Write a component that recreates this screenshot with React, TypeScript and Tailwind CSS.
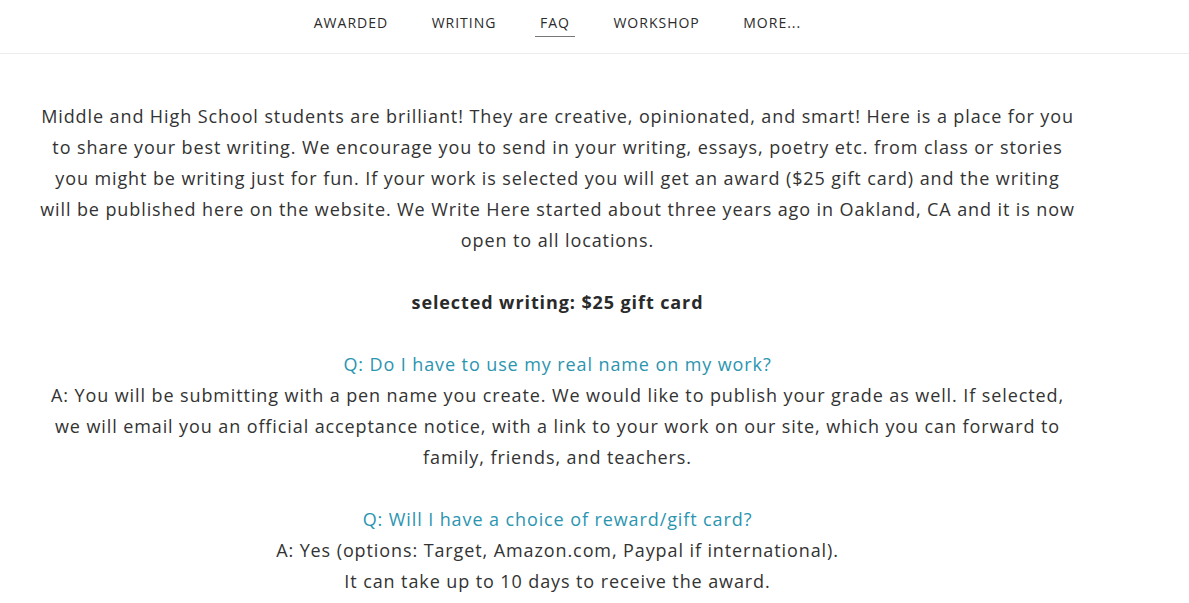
import React from 'react';

const navItems = ['AWARDED', 'WRITING', 'FAQ', 'WORKSHOP', 'MORE...'];

const intro = [
  'Middle and High School students are brilliant! They are creative, opinionated, and smart! Here is a place for you',
  'to share your best writing. We encourage you to send in your writing, essays, poetry etc. from class or stories',
  'you might be writing just for fun. If your work is selected you will get an award ($25 gift card) and the writing',
  'will be published here on the website. We Write Here started about three years ago in Oakland, CA and it is now',
  'open to all locations.',
];

const answer1 = [
  'A: You will be submitting with a pen name you create. We would like to publish your grade as well. If selected,',
  'we will email you an official acceptance notice, with a link to your work on our site, which you can forward to',
  'family, friends, and teachers.',
];

const Lines: React.FC<{ lines: string[] }> = ({ lines }) => (
  <p>
    {lines.map((line, i) => (
      <React.Fragment key={i}>
        {line}
        {i < lines.length - 1 && <br />}
      </React.Fragment>
    ))}
  </p>
);

const App: React.FC = () => {
  return (
    <div className="min-h-screen bg-white text-[#333]" style={{ fontFamily: '"Open Sans", "Liberation Sans", sans-serif' }}>
      <header className="h-[54px] border-b border-[#ededed]">
        <nav className="ml-[20px] w-[1075px] flex justify-center gap-[33.5px] pt-[13px]">
          {navItems.map((item) => (
            <a
              key={item}
              href="#"
              className={`px-[5px] pb-[3px] text-[14px] leading-[20px] tracking-[1px] text-[#2b2b2b] ${
                item === 'FAQ' ? 'border-b border-[#777]' : 'border-b border-transparent'
              }`}
            >
              {item}
            </a>
          ))}
        </nav>
      </header>

      <main className="ml-[20px] w-[1075px] pt-[47px] text-center text-[18px] leading-[31px] tracking-[0.9px] whitespace-nowrap">
        <Lines lines={intro} />
        <br />
        <p className="font-bold text-[#2a2a2a]">selected writing: $25 gift card</p>
        <br />
        <p className="text-[#2b95b0]">Q: Do I have to use my real name on my work?</p>
        <Lines lines={answer1} />
        <br />
        <p className="text-[#2b95b0]">Q: Will I have a choice of reward/gift card?</p>
        <p>A: Yes (options: Target, Amazon.com, Paypal if international).</p>
        <p>It can take up to 10 days to receive the award.</p>
      </main>
    </div>
  );
};

export default App;
